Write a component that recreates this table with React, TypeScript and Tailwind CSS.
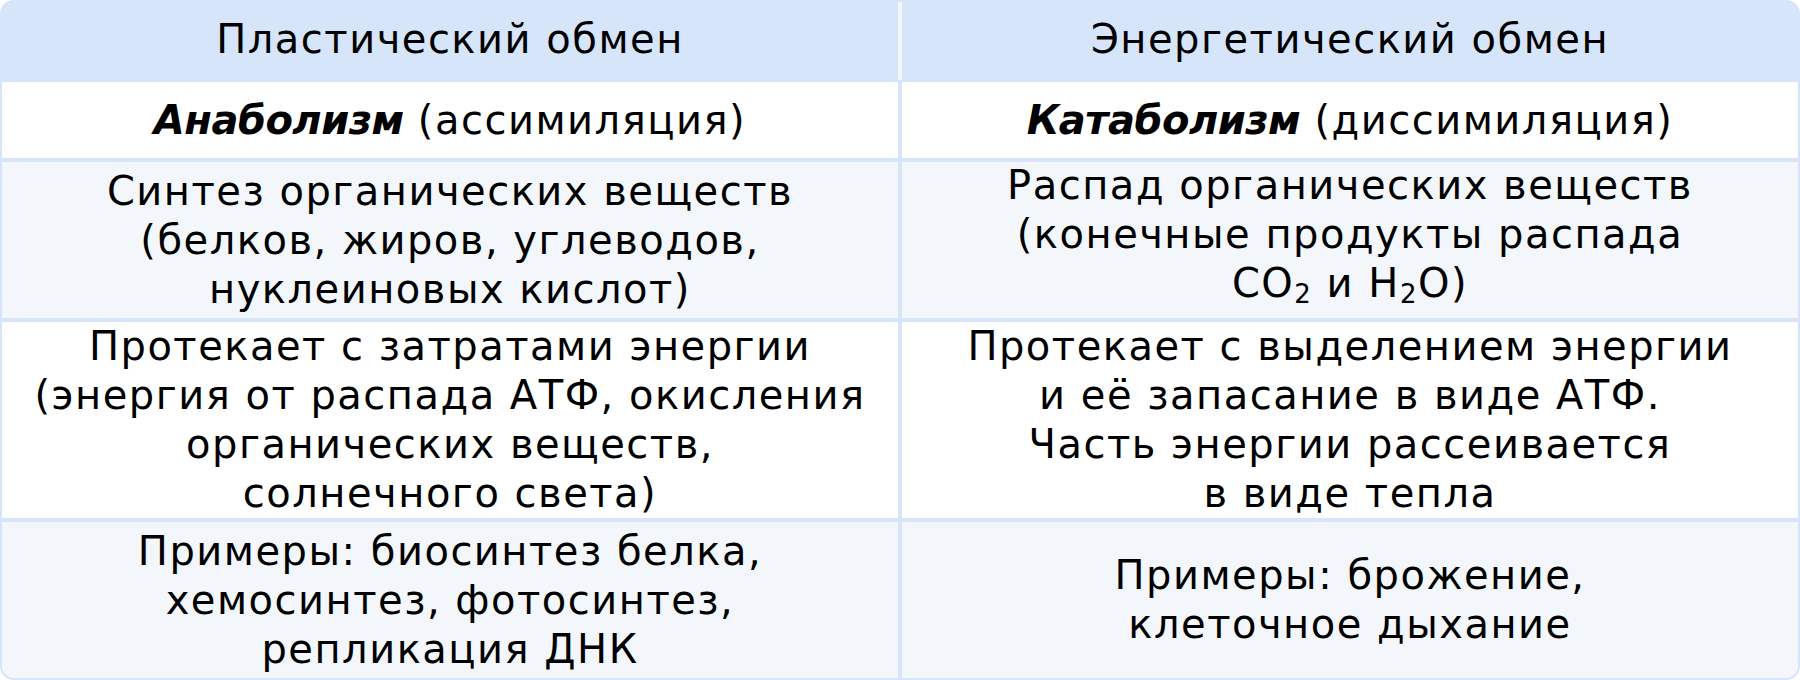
import type { ReactNode } from 'react';

const font = { fontFamily: '"DejaVu Sans", "Noto Sans", sans-serif' };

function Sub({ children }: { children: ReactNode }) {
  return <span className="text-[26px] align-[-6px]">{children}</span>;
}

function Cell({
  lines,
  className = '',
}: {
  lines: ReactNode[];
  className?: string;
}) {
  return (
    <div className={`flex-1 flex flex-col items-center justify-center text-center ${className}`}>
      {lines.map((line, i) => (
        <div key={i} className="whitespace-nowrap leading-[49px]">
          {line}
        </div>
      ))}
    </div>
  );
}

function Row({
  left,
  right,
  height,
  bg,
  last = false,
}: {
  left: ReactNode[];
  right: ReactNode[];
  height: string;
  bg: string;
  last?: boolean;
}) {
  return (
    <div className={`flex gap-[4px] ${height}`}>
      <Cell lines={left} className={`${bg} ${last ? 'rounded-bl-[12px]' : ''}`} />
      <Cell lines={right} className={`${bg} ${last ? 'rounded-br-[12px]' : ''}`} />
    </div>
  );
}

export default function App() {
  return (
    <div
      className="w-[1800px] h-[680px] bg-[#d6e5fa] rounded-[14px] p-[2px] flex flex-col gap-[4px] text-[40px] tracking-[1.5px] text-black"
      style={font}
    >
      <div className="flex h-[76px] -mb-[4px] pb-0">
        <div className="flex-1 flex items-center justify-center pb-[2px]">Пластический обмен</div>
        <div className="w-[4px] h-[78px] bg-[#f3f7fc] shrink-0" />
        <div className="flex-1 flex items-center justify-center pb-[2px]">Энергетический обмен</div>
      </div>
      <div className="h-[4px] -mt-[4px]" />
      <Row
        height="h-[76px]"
        bg="bg-white"
        left={[
          <>
            <b className="italic font-bold tracking-[-0.5px]">Анаболизм</b> (ассимиляция)
          </>,
        ]}
        right={[
          <>
            <b className="italic font-bold tracking-[-0.5px]">Катаболизм</b> (диссимиляция)
          </>,
        ]}
      />
      <Row
        height="h-[156px]"
        bg="bg-[#f3f7fc]"
        left={['Синтез органических веществ', '(белков, жиров, углеводов,', 'нуклеиновых кислот)']}
        right={[
          'Распад органических веществ',
          '(конечные продукты распада',
          <>
            CO<Sub>2</Sub> и H<Sub>2</Sub>O)
          </>,
        ]}
      />
      <Row
        height="h-[196px]"
        bg="bg-white"
        left={[
          'Протекает с затратами энергии',
          '(энергия от распада АТФ, окисления',
          'органических веществ,',
          'солнечного света)',
        ]}
        right={[
          'Протекает с выделением энергии',
          'и её запасание в виде АТФ.',
          'Часть энергии рассеивается',
          'в виде тепла',
        ]}
      />
      <Row
        height="h-[156px]"
        bg="bg-[#f3f7fc]"
        last
        left={['Примеры: биосинтез белка,', 'хемосинтез, фотосинтез,', 'репликация ДНК']}
        right={['Примеры: брожение,', 'клеточное дыхание']}
      />
    </div>
  );
}
